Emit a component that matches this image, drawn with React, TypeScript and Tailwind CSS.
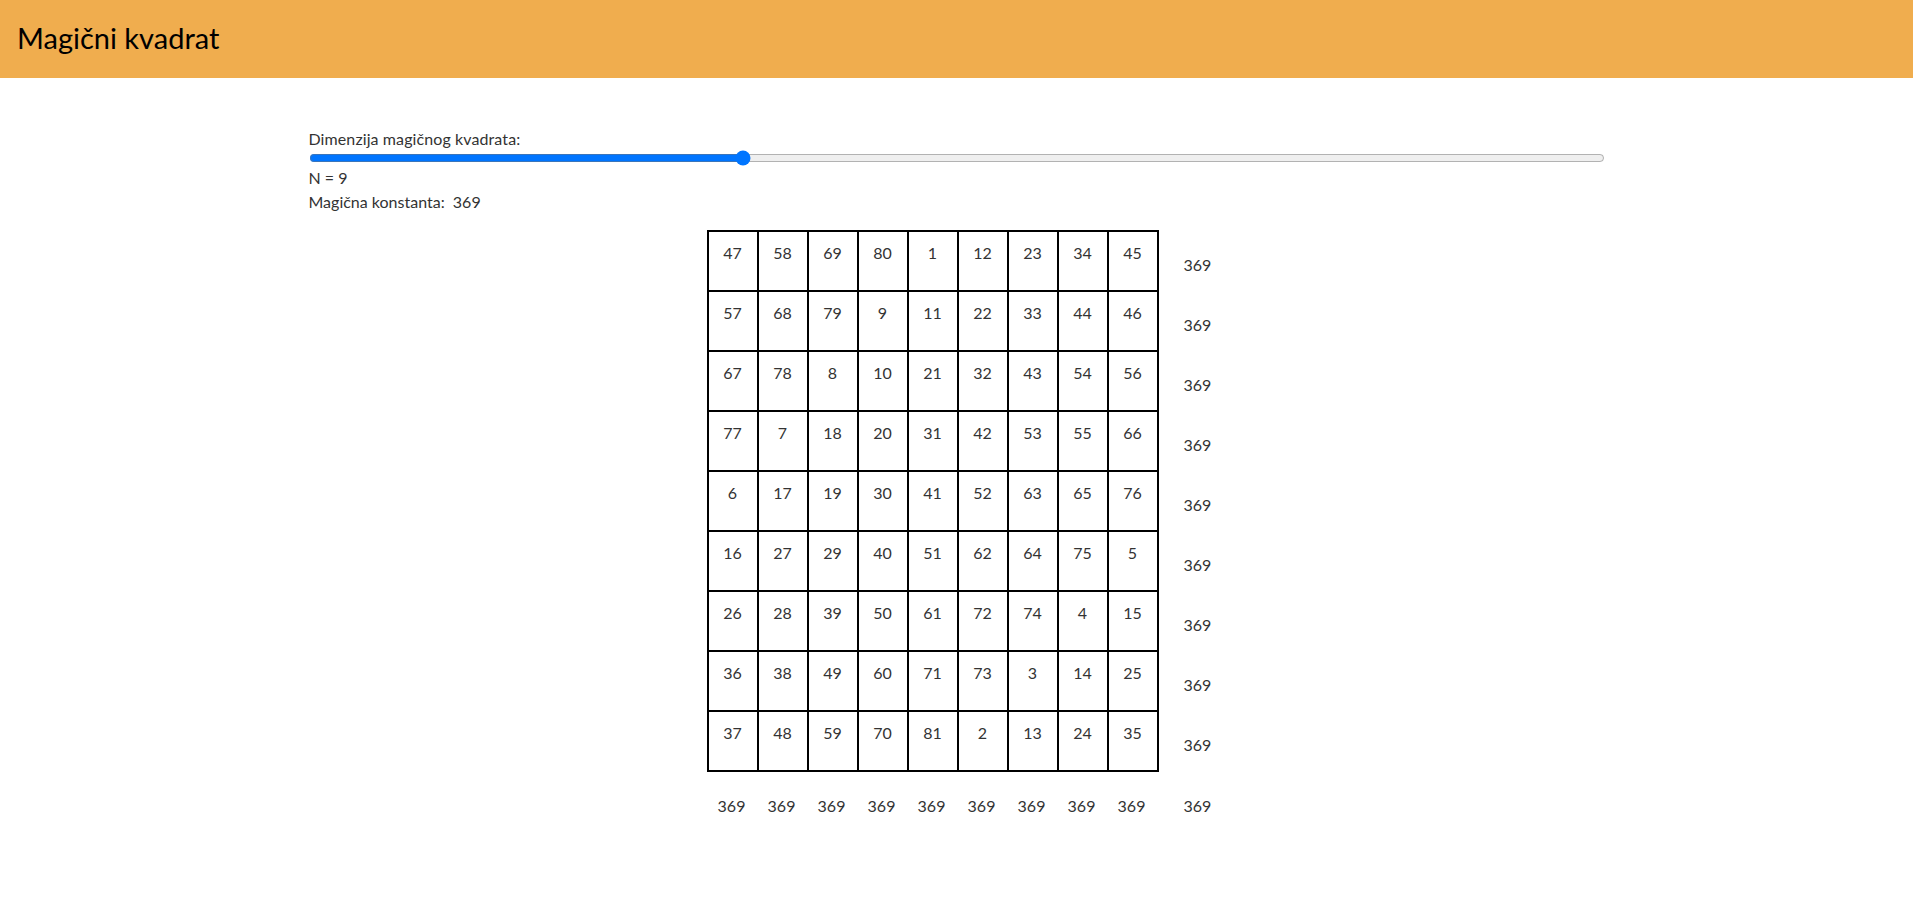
import React from "react";

const square: number[][] = [
  [47, 58, 69, 80, 1, 12, 23, 34, 45],
  [57, 68, 79, 9, 11, 22, 33, 44, 46],
  [67, 78, 8, 10, 21, 32, 43, 54, 56],
  [77, 7, 18, 20, 31, 42, 53, 55, 66],
  [6, 17, 19, 30, 41, 52, 63, 65, 76],
  [16, 27, 29, 40, 51, 62, 64, 75, 5],
  [26, 28, 39, 50, 61, 72, 74, 4, 15],
  [36, 38, 49, 60, 71, 73, 3, 14, 25],
  [37, 48, 59, 70, 81, 2, 13, 24, 35],
];

export default function App() {
  const [n, setN] = React.useState(9);
  return (
    <div
      className="min-h-screen bg-white text-[#333333] text-[16px] leading-6"
      style={{ fontFamily: "Lato, 'Noto Sans', sans-serif" }}
    >
      <header className="h-[78px] bg-[#f0ad4e] flex items-center px-[17px]">
        <h1 className="text-[29px] leading-[36px] text-black font-normal -mt-[2px]">Magični kvadrat</h1>
      </header>
      <main className="mx-auto max-w-[1320px] px-3 pt-[49px]">
        <div className="tracking-[0.1px]">Dimenzija magičnog kvadrata:</div>
        <input
          type="range"
          min={3}
          max={21}
          value={n}
          onChange={(e) => setN(Number(e.target.value))}
          className="block w-full h-4 m-0 -mt-px accent-[#0075ff]"
        />
        <div>N = {n}</div>
        <div>Magična konstanta:&nbsp; 369</div>
        <div className="mx-auto w-[500px] mt-4">
          {square.map((row, r) => (
            <div key={r} className="flex">
              {row.map((v, c) => (
                <div
                  key={c}
                  className={
                    "h-[60px] border-black border-l-2 border-t-2 text-center pt-[9px] " +
                    (c === 8 ? "w-[52px] border-r-2 " : "w-[50px] ") +
                    (r === 8 ? "h-[62px] border-b-2" : "")
                  }
                >
                  {v}
                </div>
              ))}
              <div className="w-[48px] pl-[25px] pt-[23px]">369</div>
            </div>
          ))}
          <div className="flex pt-[22px]">
            {Array.from({ length: 9 }).map((_, i) => (
              <div key={i} className="w-[50px] text-center">
                369
              </div>
            ))}
            <div className="w-[50px] pl-[27px]">369</div>
          </div>
        </div>
      </main>
    </div>
  );
}
